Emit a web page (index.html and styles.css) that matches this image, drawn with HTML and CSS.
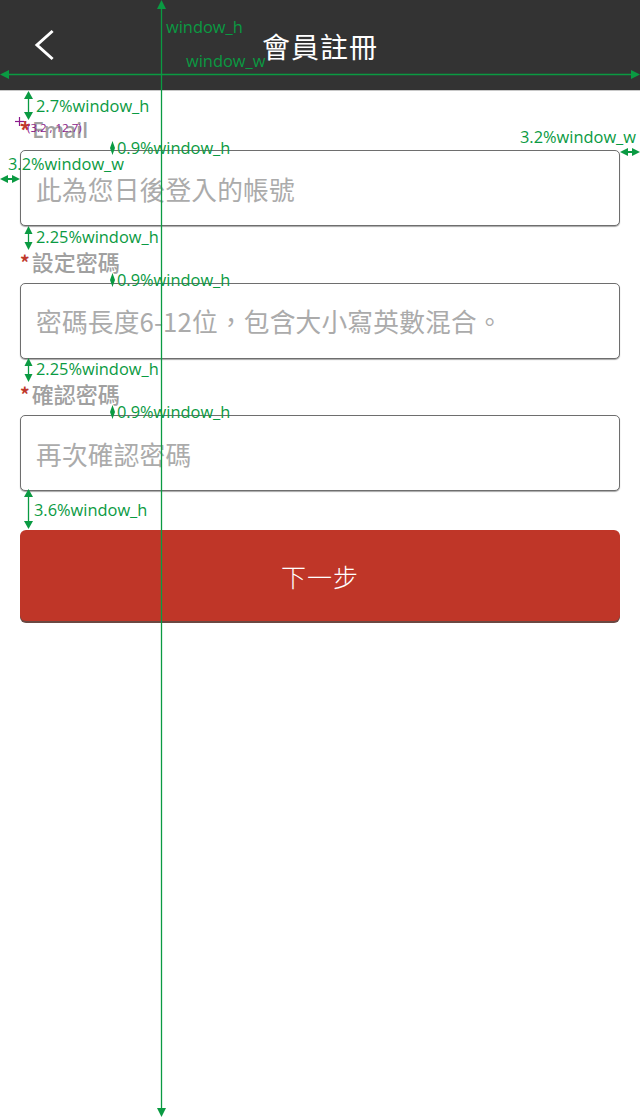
FILE: index.html
```html
<!DOCTYPE html>
<html lang="zh-Hant">
<head>
<meta charset="utf-8">
<title>會員註冊</title>
<link rel="stylesheet" href="styles.css">
</head>
<body>
<div class="page">
  <header class="topbar">
    <button class="back" aria-label="返回">
      <svg width="24" height="32" viewBox="0 0 24 32"><polyline points="18.5,3 4,16 18.5,29" fill="none" stroke="#fff" stroke-width="3" stroke-linecap="square"/></svg>
    </button>
    <h1 class="title">會員註冊</h1>
  </header>

  <main class="form">
    <label class="label first"><span class="req">*</span>Email</label>
    <div class="field"><span class="ph">此為您日後登入的帳號</span></div>

    <label class="label"><span class="req">*</span>設定密碼</label>
    <div class="field"><span class="ph">密碼長度6-12位，包含大小寫英數混合。</span></div>

    <label class="label"><span class="req">*</span>確認密碼</label>
    <div class="field"><span class="ph">再次確認密碼</span></div>

    <button class="next">下一步</button>
  </main>

  <svg class="notes" width="640" height="1118" viewBox="0 0 640 1118">
    <g class="g-line">
      <line x1="161.5" y1="4" x2="161.5" y2="1112"/>
      <line x1="4" y1="74.5" x2="636" y2="74.5"/>
      <line x1="28.5" y1="97" x2="28.5" y2="114"/>
      <line x1="28.5" y1="232" x2="28.5" y2="244"/>
      <line x1="28.5" y1="364" x2="28.5" y2="376"/>
      <line x1="28.5" y1="495" x2="28.5" y2="523"/>
    </g>
    <g class="g-fill">
      <polygon points="161.5,0 157,9 166,9"/>
      <polygon points="161.5,1117 157,1108 166,1108"/>
      <polygon points="0,74.5 9,70 9,79"/>
      <polygon points="640,74.5 631,70 631,79"/>
      <polygon points="28.5,91 24,99 33,99"/>
      <polygon points="28.5,120 24,112 33,112"/>
      <polygon points="28.5,226 24.5,234 32.5,234"/>
      <polygon points="28.5,250 24.5,242 32.5,242"/>
      <polygon points="28.5,358 24.5,366 32.5,366"/>
      <polygon points="28.5,382 24.5,374 32.5,374"/>
      <polygon points="28.5,489 24,497 33,497"/>
      <polygon points="28.5,529 24,521 33,521"/>
      <polygon points="112.5,141 110,148 115,148"/>
      <polygon points="112.5,155 110,148 115,148"/>
      <polygon points="112.5,273 110,280 115,280"/>
      <polygon points="112.5,287 110,280 115,280"/>
      <polygon points="112.5,405 110,412 115,412"/>
      <polygon points="112.5,419 110,412 115,412"/>
      <polygon points="0,179 8,175 8,183"/>
      <polygon points="20,179 12,175 12,183"/>
      <rect x="6" y="178" width="8" height="2"/>
      <polygon points="620,152 628,148 628,156"/>
      <polygon points="640,152 632,148 632,156"/>
      <rect x="626" y="151" width="8" height="2"/>
    </g>
    <g class="g-text">
      <text x="166" y="33">window_h</text>
      <text x="186" y="67">window_w</text>
      <text x="36" y="112">2.7%window_h</text>
      <text x="117" y="154">0.9%window_h</text>
      <text x="8" y="170">3.2%window_w</text>
      <text x="520" y="143">3.2%window_w</text>
      <text x="36" y="243">2.25%window_h</text>
      <text x="117" y="286">0.9%window_h</text>
      <text x="36" y="375">2.25%window_h</text>
      <text x="117" y="418">0.9%window_h</text>
      <text x="34" y="516">3.6%window_h</text>
    </g>
    <g class="g-purple">
      <line x1="15" y1="121.5" x2="24" y2="121.5"/>
      <line x1="19.5" y1="117" x2="19.5" y2="126"/>
    </g>
    <text class="t-purple" x="27" y="132">(3.2 , 12.7)</text>
  </svg>
</div>
</body>
</html>
```

FILE: styles.css
```css
* { box-sizing: border-box; }
html, body { margin: 0; padding: 0; background: #fff; }
body { font-family: "Noto Sans CJK TC", "Noto Sans", sans-serif; }

.page {
  position: relative;
  width: 640px;
  height: 1118px;
  overflow: hidden;
}

.topbar {
  height: 91px;
  background: #333333;
  border-bottom: 1px solid #c8c8c8;
  display: flex;
  align-items: center;
  justify-content: center;
  position: relative;
}
.back {
  position: absolute;
  left: 33px;
  top: 29px;
  width: 24px;
  height: 32px;
  padding: 0;
  border: 0;
  background: none;
  display: block;
}
.back svg { display: block; }
.title {
  margin: 0;
  color: #fff;
  font-size: 28px;
  font-weight: 400;
  letter-spacing: 1px;
  line-height: 1;
  padding-top: 2px;
}

.form {
  display: flex;
  flex-direction: column;
  padding: 0 20px;
}

.label {
  display: flex;
  align-items: center;
  height: 30px;
  margin-top: 21.5px;
  margin-bottom: 5px;
  padding-bottom: 4px;
  font-size: 22px;
  font-weight: 500;
  color: #a0a0a0;
  font-family: "Noto Sans CJK TC", "Open Sans", sans-serif;
}
.label.first {
  margin-top: 24px;
  padding-bottom: 0;
  font-family: "Open Sans", "Noto Sans CJK TC", sans-serif;
  font-size: 21px;
  font-weight: 600;
}
.req {
  color: #c0392b;
  font-size: 19px;
  font-weight: 700;
  margin-right: 2px;
  align-self: flex-start;
  line-height: 28px;
}

.field {
  height: 76px;
  border: 1px solid #6e6e6e;
  border-radius: 5px;
  box-shadow: 0 1px 1px rgba(0,0,0,0.35);
  display: flex;
  align-items: center;
  padding-left: 15px;
  background: #fff;
}
.ph {
  font-size: 25.7px;
  color: #ababab;
  font-weight: 400;
  letter-spacing: 0.2px;
}

.next {
  margin-top: 39px;
  height: 91px;
  width: 600px;
  border: 0;
  border-radius: 6px;
  background: #bf3628;
  box-shadow: 0 2px 0 #6a4842;
  color: #fff;
  font-family: "Noto Sans CJK TC", sans-serif;
  font-size: 25px;
  font-weight: 300;
  letter-spacing: 1px;
  padding: 0;
}

.notes {
  position: absolute;
  left: 0;
  top: 0;
  pointer-events: none;
}
.g-line line { stroke: #0a9a42; stroke-width: 1.3; }
.g-fill { fill: #0a9a42; }
.g-text text {
  fill: #0a9a42;
  font-family: "Open Sans", "Noto Sans", sans-serif;
  font-size: 16.4px;
}
.g-purple line { stroke: #8b1a8b; stroke-width: 1.2; }
.t-purple {
  fill: #8b1a8b;
  font-family: "Open Sans", sans-serif;
  font-size: 11.5px;
}
```
